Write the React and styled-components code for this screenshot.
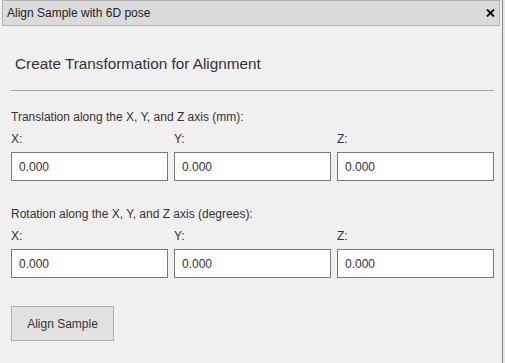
import styled, { createGlobalStyle } from "styled-components";

const Global = createGlobalStyle`
  html, body {
    margin: 0;
    padding: 0;
    background: #e6e6e6;
    font-family: "Liberation Sans", Arial, sans-serif;
  }
`;

const Dialog = styled.div`
  width: 502px;
  min-height: 100vh;
  background: #f0f0f0;
  border-right: 1px solid #8a8a8a;
  display: flex;
  flex-direction: column;
`;

const TitleBar = styled.div`
  margin: 0 2px;
  height: 26px;
  box-sizing: border-box;
  border: 1px solid #b4b4b4;
  background: #dadada;
  padding: 0 2px 0 4px;
  display: flex;
  align-items: center;
  justify-content: space-between;
`;

const Title = styled.span`
  font-size: 12px;
  color: #222;
`;

const Close = styled.button`
  width: 14px;
  height: 14px;
  padding: 0;
  border: none;
  background: none;
  display: flex;
  align-items: center;
  justify-content: center;
  cursor: pointer;
`;

const Content = styled.div`
  padding: 29px 8px 20px 11px;
`;

const Heading = styled.h3`
  margin: 0 0 0 4px;
  font-size: 15.3px;
  line-height: 18px;
  font-weight: normal;
  color: #333;
`;

const Rule = styled.hr`
  margin: 17px 0 0;
  border: none;
  border-top: 1px solid #a8a8a8;
`;

const SectionLabel = styled.div`
  margin-top: ${(p) => p.$top}px;
  font-size: 12px;
  line-height: 14px;
  color: #333;
`;

const Row = styled.div`
  margin-top: 8px;
  display: grid;
  grid-template-columns: repeat(3, 1fr);
  gap: 6px;
`;

const Field = styled.label`
  display: flex;
  flex-direction: column;
  gap: 6px;
  font-size: 12px;
  line-height: 14px;
  color: #333;
`;

const Input = styled.input`
  box-sizing: border-box;
  width: 100%;
  height: 29px;
  margin: 0;
  padding: 0 7px;
  border: 1px solid #7a7a7a;
  background: #fff;
  font-family: "Liberation Sans", Arial, sans-serif;
  font-size: 12px;
  color: #333;
  outline: none;
`;

const Button = styled.button`
  margin-top: 28px;
  width: 103px;
  height: 35px;
  border: 1px solid #adadad;
  background: #e1e1e1;
  font-family: "Liberation Sans", Arial, sans-serif;
  font-size: 12px;
  color: #333;
  cursor: pointer;
`;

const AxisGroup = ({ label, top }) => (
  <>
    <SectionLabel $top={top}>{label}</SectionLabel>
    <Row>
      {["X", "Y", "Z"].map((a) => (
        <Field key={a}>
          {a}:
          <Input type="text" defaultValue="0.000" />
        </Field>
      ))}
    </Row>
  </>
);

export default function App() {
  return (
    <>
      <Global />
      <Dialog>
        <TitleBar>
          <Title>Align Sample with 6D pose</Title>
          <Close aria-label="close">
            <svg width="9" height="8" viewBox="0 0 9 8">
              <path d="M1 0.5 L8 7.5 M8 0.5 L1 7.5" stroke="#000" strokeWidth="1.8" />
            </svg>
          </Close>
        </TitleBar>
        <Content>
          <Heading>Create Transformation for Alignment</Heading>
          <Rule />
          <AxisGroup top={19} label="Translation along the X, Y, and Z axis (mm):" />
          <AxisGroup top={26} label="Rotation along the X, Y, and Z axis (degrees):" />
          <Button>Align Sample</Button>
        </Content>
      </Dialog>
    </>
  );
}
